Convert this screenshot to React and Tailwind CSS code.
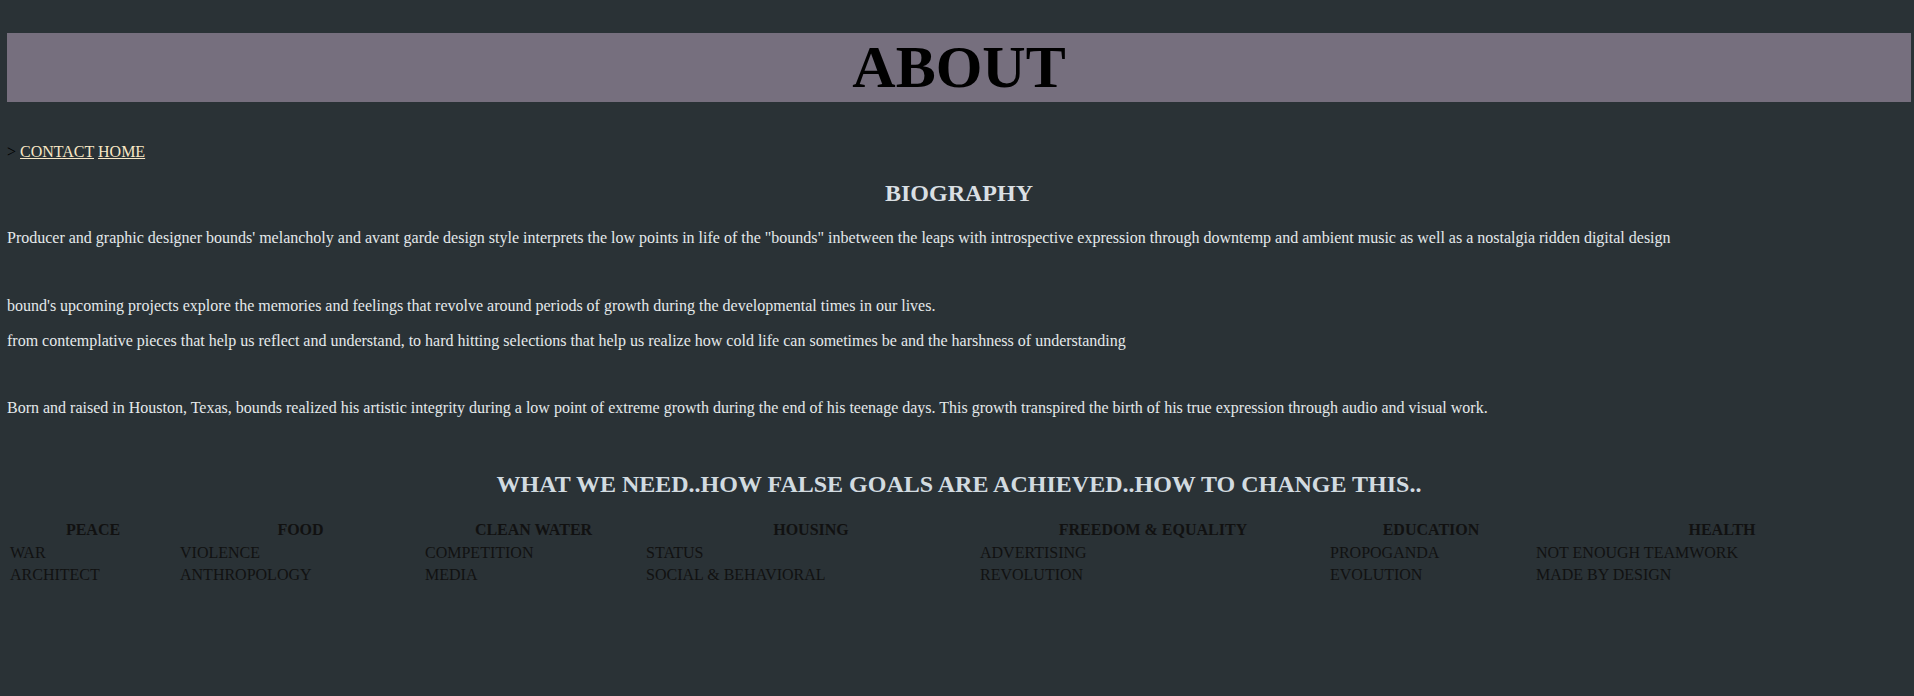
const needs = [
    { head: 'PEACE', cells: ['WAR', 'ARCHITECT'] },
    { head: 'FOOD', cells: ['VIOLENCE', 'ANTHROPOLOGY'] },
    { head: 'CLEAN WATER', cells: ['COMPETITION', 'MEDIA'] },
    { head: 'HOUSING', cells: ['STATUS', 'SOCIAL & BEHAVIORAL'] },
    { head: 'FREEDOM & EQUALITY', cells: ['ADVERTISING', 'REVOLUTION'] },
    { head: 'EDUCATION', cells: ['PROPOGANDA', 'EVOLUTION'] },
    { head: 'HEALTH', cells: ['NOT ENOUGH TEAMWORK', 'MADE BY DESIGN'] },
];

const App = () => {
    return (
        <div className="min-h-[696px] bg-[#2a3236] pl-[7px] pr-[3px] pt-[33px] pb-10 font-['Liberation_Serif','Times_New_Roman',serif] text-[16px] leading-[1.15]">
            {/* Title bar */}
            <h1 className="h-[69px] bg-[#766f7e] text-center text-[60px] font-bold leading-[69px] text-black">
                ABOUT
            </h1>

            {/* Nav */}
            <div className="mt-[41px] text-black">
                &gt;{' '}
                <a href="#contact" className="text-[#f8e7c5] underline">CONTACT</a>{' '}
                <a href="#home" className="text-[#f8e7c5] underline">HOME</a>
            </div>

            {/* Biography */}
            <h2 className="mt-[19px] text-center text-[24px] font-bold leading-[1.15] text-[#d9dfe3]">BIOGRAPHY</h2>
            <div className="text-[#e4e9eb]">
                <p className="mt-[21px]">
                    Producer and graphic designer bounds' melancholy and avant garde design style interprets the low points in life of the "bounds" inbetween the leaps with introspective expression through downtemp and ambient music as well as a nostalgia ridden digital design
                </p>
                <p className="mt-[50px]">
                    bound's upcoming projects explore the memories and feelings that revolve around periods of growth during the developmental times in our lives.
                </p>
                <p className="mt-[16px]">
                    from contemplative pieces that help us reflect and understand, to hard hitting selections that help us realize how cold life can sometimes be and the harshness of understanding
                </p>
                <p className="mt-[49px]">
                    Born and raised in Houston, Texas, bounds realized his artistic integrity during a low point of extreme growth during the end of his teenage days. This growth transpired the birth of his true expression through audio and visual work.
                </p>
            </div>

            {/* Needs table */}
            <h2 className="mt-[53px] text-center text-[24px] font-bold leading-[1.15] text-[#d2dbe0]">
                WHAT WE NEED..HOW FALSE GOALS ARE ACHIEVED..HOW TO CHANGE THIS..
            </h2>
            <div className="mt-[20px] grid grid-cols-[168px_243px_219px_332px_348px_204px_374px] gap-[2px] p-[2px] text-[#111111]">
                {needs.map(col => (
                    <div key={col.head} className="p-[1px] text-center font-bold">{col.head}</div>
                ))}
                {[0, 1].map(row =>
                    needs.map(col => (
                        <div key={col.head + row} className="p-[1px]">{col.cells[row]}</div>
                    ))
                )}
            </div>
        </div>
    );
};

export default App;
